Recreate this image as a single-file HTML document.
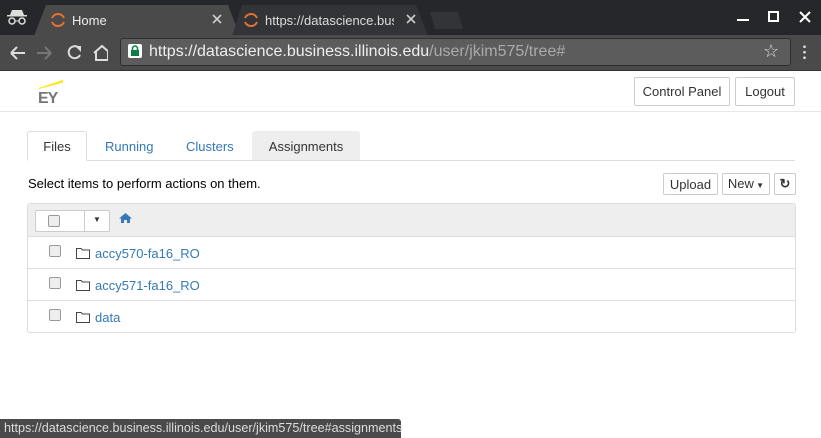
<!DOCTYPE html>
<html><head><meta charset="utf-8"><style>
*{box-sizing:border-box;margin:0;padding:0}
body{width:821px;height:438px;overflow:hidden;background:#fff;font-family:"Liberation Sans",sans-serif;position:relative;font-size:13px;color:#000}
.a{position:absolute}
.titlebar{left:0;top:0;width:821px;height:35px;background:#25272a}
.tab{top:6px;height:29px;color:#eee;font-size:13px;line-height:29px}
.btn{position:absolute;border:1px solid #ccc;border-radius:2px;background:#fff;color:#333;text-align:center;font-size:13px}
.link{color:#337ab7}
.cb{position:absolute;width:12px;height:12px;border:1px solid #999;border-radius:2px;background:#eee}
.row{position:absolute;left:28px;width:767px;height:32px;border-top:1px solid #ddd}
</style></head><body>
<div class="a titlebar"></div>
<svg class="a" style="left:6px;top:10px" width="22" height="16" viewBox="0 0 22 16"><path d="M4 5h14l-2-5h-10z" fill="#ddd"/><rect x="1" y="5" width="20" height="1.5" fill="#ddd"/><circle cx="6" cy="11" r="3" fill="none" stroke="#ddd" stroke-width="1.5"/><circle cx="16" cy="11" r="3" fill="none" stroke="#ddd" stroke-width="1.5"/><path d="M9 11h4" stroke="#ddd"/></svg>
<svg class="a" style="left:34px;top:5px" width="210" height="31"><path d="M0 31L12 0H194L206 31Z" fill="#4a4a4a"/></svg>
<svg class="a" style="left:232px;top:5px" width="200" height="31"><path d="M0 31L10 0H184L196 31Z" fill="#333437"/></svg>
<svg class="a" style="left:430px;top:12px" width="34" height="17"><path d="M0 0H28L33 17H5Z" fill="#333437"/></svg>
<svg class="a" style="left:50px;top:12px" width="16" height="16"><path d="M2 6A6.5 6.5 0 0 1 14 6M2 10A6.5 6.5 0 0 0 14 10" stroke="#e6732e" stroke-width="2" fill="none"/></svg>
<div class="a tab" style="left:72px">Home</div>
<svg class="a" style="left:212px;top:14px" width="10" height="10"><path d="M1 1L9 9M9 1L1 9" stroke="#ccc" stroke-width="1.6"/></svg>
<svg class="a" style="left:243px;top:12px" width="16" height="16"><path d="M2 6A6.5 6.5 0 0 1 14 6M2 10A6.5 6.5 0 0 0 14 10" stroke="#e6732e" stroke-width="2" fill="none"/></svg>
<div class="a tab" style="left:265px;width:129px;overflow:hidden;white-space:nowrap;color:#ddd">https://datascience.business.illinois</div>
<svg class="a" style="left:406px;top:14px" width="10" height="10"><path d="M1 1L9 9M9 1L1 9" stroke="#ccc" stroke-width="1.6"/></svg>
<div class="a" style="left:737px;top:19px;width:12px;height:2px;background:#fff"></div>
<div class="a" style="left:768px;top:11px;width:11px;height:11px;border:2px solid #fff"></div>
<svg class="a" style="left:799px;top:11px" width="12" height="12"><path d="M1 1L11 11M11 1L1 11" stroke="#fff" stroke-width="2"/></svg>
<div class="a" style="left:0;top:35px;width:821px;height:36px;background:#4a4a4a;border-bottom:1px solid #333"></div>
<svg class="a" style="left:8px;top:43px" width="100" height="20"><g stroke="#ddd" stroke-width="2" fill="none"><path d="M3 10H17M3 10L9 4M3 10L9 16"/></g><g stroke="#777" stroke-width="2" fill="none"><path d="M29 10H43M43 10L37 4M43 10L37 16"/></g><path d="M71 5A6 6 0 1 0 72 12" stroke="#ddd" stroke-width="2" fill="none"/><path d="M67 3h6v6z" fill="#ddd"/><path d="M86 10L94 3L102 10M88 9V17H100V9" stroke="#ddd" stroke-width="2" fill="none"/></svg>
<div class="a" style="left:120px;top:38px;width:671px;height:28px;background:#5c5c5c;border:1px solid #2e2e2e;border-radius:3px"></div>
<div class="a" style="left:128px;top:44px;width:14px;height:14px;background:#fff;border-radius:2px"></div>
<svg class="a" style="left:130px;top:45px" width="10" height="12"><path d="M2.5 5V3.5A2.5 2.5 0 0 1 7.5 3.5V5" stroke="#0b8043" stroke-width="1.5" fill="none"/><rect x="1" y="5" width="8" height="6" fill="#0b8043"/></svg>
<div class="a" style="left:149px;top:43px;font-size:16px;color:#eee;white-space:nowrap">https://datascience.business.illinois.edu<span style="color:#aaa">/user/jkim575/tree#</span></div>
<div class="a" style="left:763px;top:41px;color:#ddd;font-size:18px">☆</div>
<div class="a" style="left:803px;top:44px;width:3px;height:16px;background:radial-gradient(circle,#ddd 1.2px,transparent 1.5px) 0 0/3px 5.5px"></div>
<svg class="a" style="left:36px;top:78px" width="30" height="28"><path d="M3 10L27 2V4.5L3 11Z" fill="#ffe600"/><text x="2" y="25" font-family="Liberation Sans" font-weight="bold" font-size="16" fill="#777" letter-spacing="-1">EY</text></svg>
<div class="btn" style="left:634px;top:77px;width:96px;height:29px;line-height:27px">Control Panel</div>
<div class="btn" style="left:735px;top:77px;width:60px;height:29px;line-height:27px">Logout</div>
<div class="a" style="left:0;top:111px;width:821px;height:1px;background:#e7e7e7"></div>
<div class="a" style="left:28px;top:160px;width:767px;height:1px;background:#ddd"></div>
<div class="a" style="left:27px;top:131px;width:60px;height:30px;border:1px solid #ddd;border-bottom:1px solid #fff;background:#fff;border-radius:3px 3px 0 0;text-align:center;line-height:30px;color:#333">Files</div>
<div class="a link" style="left:105px;top:139px">Running</div>
<div class="a link" style="left:186px;top:139px">Clusters</div>
<div class="a" style="left:252px;top:131px;width:108px;height:29px;background:#eee;border-radius:3px 3px 0 0;text-align:center;line-height:31px;color:#333">Assignments</div>
<div class="a" style="left:28px;top:176px">Select items to perform actions on them.</div>
<div class="btn" style="left:663px;top:173px;width:55px;height:22px;line-height:22px">Upload</div>
<div class="btn" style="left:722px;top:173px;width:48px;height:22px;line-height:20px">New<span style="font-size:8px"> ▼</span></div>
<div class="btn" style="left:774px;top:173px;width:22px;height:22px;line-height:20px;font-weight:bold">↻</div>
<div class="a" style="left:27px;top:203px;width:769px;height:130px;border:1px solid #ddd;border-radius:3px"></div>
<div class="a" style="left:28px;top:204px;width:767px;height:32px;background:#eee"></div>
<div class="a" style="left:35px;top:210px;width:75px;height:22px;background:#fff;border:1px solid #ccc;border-radius:2px"></div>
<div class="a" style="left:84px;top:210px;width:1px;height:22px;background:#ccc"></div>
<div class="cb" style="left:48px;top:215px"></div>
<div class="a" style="left:93px;top:215px;font-size:8px;color:#333">▼</div>
<svg class="a" style="left:119px;top:213px" width="13" height="10"><path d="M6.5 0L13 5.5H11V10H8V7H5V10H2V5.5H0Z" fill="#337ab7"/></svg>
<div class="row" style="top:236px"></div>
<div class="row" style="top:268px"></div>
<div class="row" style="top:300px"></div>
<div class="cb" style="left:49px;top:245px"></div>
<div class="cb" style="left:49px;top:277px"></div>
<div class="cb" style="left:49px;top:309px"></div>
<svg class="a" style="left:76px;top:247px" width="14" height="12"><path d="M0.5 1.5H5L6.5 3H13.5V11.5H0.5Z" fill="none" stroke="#444"/></svg>
<svg class="a" style="left:76px;top:279px" width="14" height="12"><path d="M0.5 1.5H5L6.5 3H13.5V11.5H0.5Z" fill="none" stroke="#444"/></svg>
<svg class="a" style="left:76px;top:311px" width="14" height="12"><path d="M0.5 1.5H5L6.5 3H13.5V11.5H0.5Z" fill="none" stroke="#444"/></svg>
<div class="a link" style="left:95px;top:246px">accy570-fa16_RO</div>
<div class="a link" style="left:95px;top:278px">accy571-fa16_RO</div>
<div class="a link" style="left:95px;top:310px">data</div>
<div class="a" style="left:0;top:419px;width:401px;height:19px;background:#4a4a4a;border-radius:0 3px 0 0;color:#ddd;font-size:12.6px;line-height:19px;padding-left:4px;white-space:nowrap">https://datascience.business.illinois.edu/user/jkim575/tree#assignments</div>
</body></html>
